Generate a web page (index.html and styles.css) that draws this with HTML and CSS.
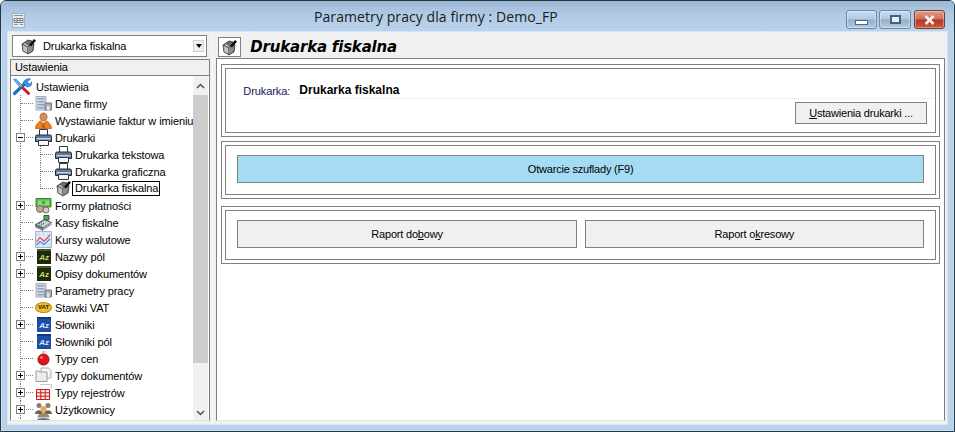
FILE: index.html
```html
<!DOCTYPE html>
<html lang="pl">
<head>
  <meta charset="UTF-8">
  <meta name="viewport" content="width=device-width, initial-scale=1.0">
  <title>Parametry pracy dla firmy : Demo_FP</title>
  <link rel="stylesheet" href="styles.css">
</head>
<body>
  <svg class="defs" width="0" height="0">
    <symbol id="i-fiscal" viewBox="0 0 17 17">
      <path d="M2 6l6-4 4 1 2 3-1 7-5 3-5-3z" fill="#6e6e6e" stroke="#333" stroke-width=".8"/>
      <path d="M2.500 6.500l5 2.500v6.500l-4.500-2.800z" fill="#c4c4c4" stroke="#4a4a4a" stroke-width=".5"/>
      <path d="M8 9l5-2.500-.7 6.200-4.300 2.600z" fill="#8c8c8c"/>
      <path d="M9 7l5-6 2 1.500-5 6z" fill="#0c0c0c"/>
      <path d="M4 5.500l3.500 2" stroke="#f2f2f2"/>
    </symbol>
    <symbol id="i-tools" viewBox="0 0 20 18">
      <path d="M2.500 15.500L14 4.500" stroke="#1f6fc9" stroke-width="3.200" stroke-linecap="round"/>
      <path d="M11.500 5c0-3 4-5 7-4l-3 2.500.5 2 2.500.5 1.500-2.500c.5 3-2 6.500-6 5z" fill="#3d97ea" stroke="#155a9f" stroke-width=".6"/>
      <path d="M1.500 1.500l2.500-.5 5.500 5.500 2 2-2 2-2-2z" fill="#67b2f0" stroke="#1e69b4" stroke-width=".6"/>
      <path d="M10.500 9.500l6 6" stroke="#c9202a" stroke-width="3" stroke-linecap="round"/>
    </symbol>
    <symbol id="i-building" viewBox="0 0 17 17">
      <path d="M1 1.500h10v13.500H1z" fill="#d3dae4" stroke="#a3aebc"/>
      <path d="M2.500 3h7v1.500h-7zM2.500 6h7v1.500h-7zM2.500 9h7v1.500h-7zM2.500 12h7v1.500h-7z" fill="#8ba2c2"/>
      <path d="M10 8h6.500v7H10z" fill="#a9adb3" stroke="#75797f"/>
      <path d="M12 11h2.500v4H12z" fill="#e4e6e9"/>
    </symbol>
    <symbol id="i-person" viewBox="0 0 17 17">
      <path d="M8.500 1c2.300 0 3.500 1.700 3.500 4s-1.500 4-3.500 4S5 7.300 5 5s1.200-4 3.500-4z" fill="#d9904f" stroke="#99521c" stroke-width=".7"/>
      <path d="M.5 16.500c.3-4.500 3-6.500 5-7.500l3 2.500 3-2.500c2 1 4.700 3 5 7.500z" fill="#ee7f1c" stroke="#a8530f" stroke-width=".7"/>
      <path d="M7 11l1.500 1.500L10 11v5.500H7z" fill="#c9600f"/>
    </symbol>
    <symbol id="i-printer" viewBox="0 0 17 17">
      <path d="M4.500 .5h8v6.500h-8z" fill="#fff" stroke="#30394a"/>
      <path d="M.5 7.500q0-1.500 1.500-1.500h13q1.500 0 1.500 1.500v5h-16z" fill="#5f7696" stroke="#232c3c"/>
      <path d="M1.500 9h14v1.500h-14z" fill="#c5d2e3"/>
      <path d="M3.500 11.500h10v5h-10z" fill="#f4f6fa" stroke="#30394a"/>
    </symbol>
    <symbol id="i-money" viewBox="0 0 17 17">
      <path d="M1 1.500h15v8.500H1z" fill="#5fbc50" stroke="#35852e"/>
      <path d="M3 3.500h11v4.500H3z" fill="#8fd67f"/>
      <circle cx="8.500" cy="5.500" r="1.800" fill="#4ba53f"/>
      <circle cx="5" cy="12" r="3.500" fill="#b9a795" stroke="#7a6c5f"/>
      <circle cx="11" cy="13" r="3" fill="#d5cdc3" stroke="#7a6c5f"/>
    </symbol>
    <symbol id="i-till" viewBox="0 0 17 17">
      <path d="M.5 10.500l9-5 7 3-8.500 5.500z" fill="#c7d0d8" stroke="#3f4b57"/>
      <path d="M.5 10.500l7.500 3.500v2.500L.5 13z" fill="#74808b" stroke="#3f4b57" stroke-width=".5"/>
      <path d="M8 16.500l8.500-5.500V8.500L8 14z" fill="#98a4ae"/>
      <path d="M9 1.500h5v4.500H9z" fill="#52a75b" stroke="#2a5f2e"/>
      <path d="M4 10l1-.5M6 9l1-.5M6 11l1-.5M8 10l1-.5" stroke="#333"/>
    </symbol>
    <symbol id="i-chart" viewBox="0 0 17 17">
      <path d="M.5.500h16v16H.5z" fill="#d5e2f5" stroke="#9fb6d6"/>
      <path d="M1 6h15M1 11h15M6 1v15M11 1v15" stroke="#eef4fc"/>
      <path d="M1.500 11L5 6.500l4 4 6-6.500" stroke="#e04f55" stroke-width="1.200" fill="none"/>
      <path d="M1.500 14L5 10.500l4 3 6-5.500" stroke="#4f88cf" stroke-width="1.200" fill="none"/>
    </symbol>
    <symbol id="i-ball" viewBox="0 0 17 17">
      <circle cx="8.500" cy="9.500" r="5.500" fill="#e4121b" stroke="#8c0c10"/>
      <circle cx="6.500" cy="7.500" r="1.500" fill="#f77"/>
      <path d="M7 1h3.500v2.500H7z" fill="#d9c7a8"/>
    </symbol>
    <symbol id="i-docs" viewBox="0 0 17 17">
      <path d="M6 1h7.500L16 3.500V11H6z" fill="#f5f5f5" stroke="#adadad"/>
      <path d="M1 4h3l1 1h7v9.500H1z" fill="#ececec" stroke="#9c9c9c"/>
    </symbol>
    <symbol id="i-grid" viewBox="0 0 17 17">
      <path d="M5 .5h11.500v4" fill="none" stroke="#c8c8c8"/>
      <path d="M1.500 5.500h13v10h-13zM1.500 8.800h13M1.500 12.200h13M5.800 5.500v10M10.200 5.500v10" fill="#fde8e8" stroke="#c41a1a"/>
    </symbol>
    <symbol id="i-users" viewBox="0 0 17 17">
      <circle cx="4" cy="4.500" r="2.500" fill="#8c7a70"/>
      <circle cx="13" cy="4.500" r="2.500" fill="#8c7a70"/>
      <path d="M0 13c0-5 8-5 8 0zM9 13c0-5 8-5 8 0z" fill="#6f6259"/>
      <circle cx="8.500" cy="8" r="3" fill="#e1ac62"/>
      <path d="M2.500 16.500c0-6 12-6 12 0z" fill="#a78a5c"/>
    </symbol>
    <symbol id="i-link" viewBox="0 0 17 17">
      <path d="M2.500 2.500c1.500-2 10-2 12 0" fill="none" stroke="#4a78b8" stroke-width="2"/>
    </symbol>
  </svg>

  <div class="window">
    <header class="titlebar">
      <svg class="app-icon" viewBox="0 0 13 15" width="13" height="15">
        <path d="M.5.500h12v14H.5z" fill="#e4e9ee" stroke="#a8b2bc"/>
        <path d="M2 2.500h9" stroke="#8a95a1"/>
        <path d="M2 5.500h9v4H2zM2 7.500h9M5 5.500v4M8 5.500v4" fill="#f5f7f9" stroke="#78838f"/>
        <path d="M2 11.500h4M8 11.500h3" stroke="#8a95a1"/>
      </svg>
      <span class="title">Parametry pracy dla firmy : Demo_FP</span>
      <div class="controls">
        <span class="ctl ctl-min"><i></i></span>
        <span class="ctl ctl-max"><i></i></span>
        <span class="ctl ctl-close">
          <svg viewBox="0 0 13 10" width="13" height="10"><path d="M2.500 1l8 8M10.500 1l-8 8" stroke="#f6efec" stroke-width="2.600"/></svg>
        </span>
      </div>
    </header>

    <div class="client">
      <aside class="side">
        <div class="combo">
          <svg class="icon"><use href="#i-fiscal"/></svg>
          <span class="combo-text">Drukarka fiskalna</span>
          <span class="combo-btn"></span>
        </div>
        <div class="side-head">Ustawienia</div>
        <div class="tree-box">
          <ul class="tree">
            <li class="row root"><svg class="icon-root"><use href="#i-tools"/></svg><span>Ustawienia</span></li>
            <li class="row"><b class="tee"></b><svg class="icon"><use href="#i-building"/></svg><span>Dane firmy</span></li>
            <li class="row"><b class="tee"></b><svg class="icon"><use href="#i-person"/></svg><span>Wystawianie faktur w imieniu</span></li>
            <li class="row"><b class="tee"><em class="toggle open"></em></b><svg class="icon"><use href="#i-printer"/></svg><span>Drukarki</span></li>
            <li class="row"><b class="pass"></b><b class="tee"></b><svg class="icon"><use href="#i-printer"/></svg><span>Drukarka tekstowa</span></li>
            <li class="row"><b class="pass"></b><b class="tee"></b><svg class="icon"><use href="#i-printer"/></svg><span>Drukarka graficzna</span></li>
            <li class="row"><b class="pass"></b><b class="tee elbow"></b><svg class="icon"><use href="#i-fiscal"/></svg><span class="selected">Drukarka fiskalna</span></li>
            <li class="row"><b class="tee"><em class="toggle"></em></b><svg class="icon"><use href="#i-money"/></svg><span>Formy płatności</span></li>
            <li class="row"><b class="tee"></b><svg class="icon"><use href="#i-till"/></svg><span>Kasy fiskalne</span></li>
            <li class="row"><b class="tee"></b><svg class="icon"><use href="#i-chart"/></svg><span>Kursy walutowe</span></li>
            <li class="row"><b class="tee"><em class="toggle"></em></b><i class="az az-dark">Az</i><span>Nazwy pól</span></li>
            <li class="row"><b class="tee"><em class="toggle"></em></b><i class="az az-dark">Az</i><span>Opisy dokumentów</span></li>
            <li class="row"><b class="tee"></b><svg class="icon"><use href="#i-building"/></svg><span>Parametry pracy</span></li>
            <li class="row"><b class="tee"></b><i class="vat">VAT</i><span>Stawki VAT</span></li>
            <li class="row"><b class="tee"><em class="toggle"></em></b><i class="az az-blue">Az</i><span>Słowniki</span></li>
            <li class="row"><b class="tee"></b><i class="az az-blue">Az</i><span>Słowniki pól</span></li>
            <li class="row"><b class="tee"></b><svg class="icon"><use href="#i-ball"/></svg><span>Typy cen</span></li>
            <li class="row"><b class="tee"><em class="toggle"></em></b><svg class="icon"><use href="#i-docs"/></svg><span>Typy dokumentów</span></li>
            <li class="row"><b class="tee"><em class="toggle"></em></b><svg class="icon"><use href="#i-grid"/></svg><span>Typy rejestrów</span></li>
            <li class="row"><b class="tee"><em class="toggle"></em></b><svg class="icon"><use href="#i-users"/></svg><span>Użytkownicy</span></li>
            <li class="row"><b class="tee"></b><svg class="icon"><use href="#i-link"/></svg></li>
          </ul>
          <div class="scrollbar">
            <svg class="arrow" viewBox="0 0 9 6" width="9" height="6"><path d="M1 5l3.500-3.500L8 5" fill="none" stroke="#505050" stroke-width="1.500"/></svg>
            <div class="thumb"></div>
            <svg class="arrow" viewBox="0 0 9 6" width="9" height="6"><path d="M1 1l3.500 3.500L8 1" fill="none" stroke="#505050" stroke-width="1.500"/></svg>
          </div>
        </div>
      </aside>

      <main class="main">
        <div class="main-head">
          <span class="head-icon"><svg class="icon"><use href="#i-fiscal"/></svg></span>
          <h1>Drukarka fiskalna</h1>
        </div>
        <div class="panel">
          <section class="group">
            <div class="group-inner printer">
              <div class="field">
                <span class="field-label">Drukarka:</span>
                <span class="field-value">Drukarka fiskalna</span>
              </div>
              <div class="btn-right">
                <button class="btn btn-settings"><u>U</u>stawienia drukarki ...</button>
              </div>
            </div>
          </section>
          <section class="group">
            <div class="group-inner actions">
              <button class="btn btn-blue">Otwarcie szuflady (F9)</button>
            </div>
          </section>
          <section class="group group-last">
            <div class="group-inner actions">
              <button class="btn">Raport do<u>b</u>owy</button>
              <button class="btn">Raport o<u>k</u>resowy</button>
            </div>
          </section>
        </div>
      </main>
    </div>
  </div>
</body>
</html>
```

FILE: styles.css
```css
* {
  box-sizing: border-box;
  margin: 0;
  padding: 0;
}
body {
  width: 955px;
  height: 432px;
  overflow: hidden;
  background: #fff;
  font-family: 'Liberation Sans', Arial, sans-serif;
  font-size: 11px;
  letter-spacing: -0.1px;
  color: #000;
}
.defs {
  position: absolute;
}

/* okno */
.window {
  display: flex;
  flex-direction: column;
  width: 955px;
  height: 432px;
  border: 1px solid #24363f;
  border-radius: 6px 6px 0 0;
  background: #b9d1ea;
  box-shadow: inset 0 0 0 1px #c4e2ef;
  overflow: hidden;
}
.titlebar {
  display: flex;
  align-items: center;
  flex: 0 0 31px;
  padding: 0 9px 0 11px;
  background: linear-gradient(180deg, #9db8d4 0, #b2cbe5 45%, #bad3ee 100%);
}
.app-icon {
  margin-top: 8px;
}
.title {
  flex: 1;
  padding: 0 0 0 289px;
  font-family: 'Open Sans', sans-serif;
  font-size: 14px;
  letter-spacing: 0.08px;
  color: #1a1a1a;
}
.controls {
  display: flex;
  align-self: flex-start;
  margin-top: 9px;
}
.ctl {
  display: flex;
  align-items: center;
  justify-content: center;
  width: 31px;
  height: 19px;
  border: 1px solid #6d87a1;
  border-radius: 3px;
  background: linear-gradient(180deg, #c9dbee 0, #b0c8e1 48%, #92aecb 52%, #b4cce5 100%);
  box-shadow: inset 0 0 0 1px rgba(255, 255, 255, 0.35);
}
.ctl-min i {
  display: block;
  width: 13px;
  height: 5px;
  margin-top: 6px;
  border: 1px solid #51667c;
  background: #fff;
}
.ctl-max {
  width: 32px;
  margin: 0 3px 0 2px;
}
.ctl-max i {
  display: block;
  width: 11px;
  height: 9px;
  border: 2px solid #4c6177;
  background: #e6eef6;
}
.ctl-close {
  border-color: #7c3a2f;
  background: linear-gradient(180deg, #dd9c8b 0, #cc7058 48%, #b5341f 52%, #cb5a42 100%);
}

.client {
  display: flex;
  flex: 1;
  min-height: 0;
  margin: 0 7px 7px;
  background: #f0f0f0;
  box-shadow: 0 0 0 1px #d6e5f4;
}

/* lewa strona */
.side {
  display: flex;
  flex-direction: column;
  flex: 0 0 202px;
  min-height: 0;
  padding: 3px 0 3px 2px;
}
.combo {
  display: flex;
  align-items: center;
  flex: 0 0 22px;
  margin: 0 3px 2px 2px;
  padding: 0 2px 0 7px;
  border: 1px solid #808080;
  background: #fff;
}
.combo-text {
  flex: 1;
  padding-left: 3px;
}
.combo-btn {
  position: relative;
  width: 11px;
  height: 12px;
  border: 1px solid #d0d0d0;
  background: #f0f0f0;
}
.combo-btn::after {
  content: "";
  position: absolute;
  left: 2px;
  top: 3px;
  border: 3px solid transparent;
  border-top: 4px solid #000;
  border-bottom: 0;
}
.side-head {
  flex: 0 0 17px;
  padding-left: 4px;
  border: 1px solid #808080;
  line-height: 15px;
}
.tree-box {
  display: flex;
  flex: 1;
  min-height: 0;
  border: 1px solid #808080;
  border-top-width: 0;
  border-bottom-color: #e4e4e4;
  background: #fff;
}
.tree {
  flex: 1;
  padding-top: 2px;
  list-style: none;
  overflow: hidden;
}
.row {
  display: flex;
  align-items: center;
  height: 17px;
  padding-left: 9px;
  white-space: nowrap;
}
.row.root {
  padding-left: 1px;
}
.icon {
  flex: none;
  width: 17px;
  height: 17px;
  margin-right: 3px;
}
.icon-root {
  flex: none;
  width: 20px;
  height: 18px;
  margin-right: 4px;
}
.az {
  flex: none;
  width: 14px;
  height: 15px;
  margin: 0 4px 0 2px;
  border-top: 2px solid #46562a;
  background: #1d2a0c;
  color: #cfd86a;
  font-size: 8px;
  font-weight: bold;
  line-height: 13px;
  text-align: center;
}
.az-blue {
  border-top-color: #143777;
  background: #1c4fa8;
  color: #dfe9ff;
}
.vat {
  flex: none;
  width: 17px;
  height: 11px;
  margin-right: 3px;
  border: 1px solid #b88a10;
  border-radius: 50%;
  background: #f1bf28;
  color: #222;
  font-size: 6px;
  font-style: normal;
  font-weight: bold;
  line-height: 9px;
  letter-spacing: 0;
  text-align: center;
}
.pass {
  flex: none;
  width: 20px;
  height: 17px;
  border-left: 1px dotted #808080;
}
.tee {
  position: relative;
  flex: none;
  width: 13px;
  height: 17px;
  margin-right: 2px;
  border-left: 1px dotted #808080;
}
.tee::before {
  content: "";
  position: absolute;
  left: 0;
  top: 8px;
  width: 12px;
  border-top: 1px dotted #808080;
}
.tee.elbow {
  height: 9px;
  align-self: flex-start;
}
.toggle {
  position: absolute;
  left: -5px;
  top: 4px;
  width: 9px;
  height: 9px;
  border: 1px solid #808080;
  background: linear-gradient(#000, #000) center / 5px 1px no-repeat,
    linear-gradient(#000, #000) center / 1px 5px no-repeat,
    #fff;
}
.toggle.open {
  background: linear-gradient(#000, #000) center / 5px 1px no-repeat, #fff;
}
.selected {
  margin-left: -3px;
  padding: 0 1px 0 2px;
  border: 1px solid #000;
  line-height: 13px;
}
.scrollbar {
  display: flex;
  flex-direction: column;
  align-items: center;
  flex: 0 0 15px;
  margin-right: 1px;
  padding: 7px 0 4px;
  background: #f0f0f0;
}
.thumb {
  flex: 0 0 268px;
  align-self: stretch;
  margin: 6px 0 auto;
  background: #cdcdcd;
}

/* prawa strona */
.main {
  display: flex;
  flex-direction: column;
  flex: 1;
  min-height: 0;
  margin-left: 2px;
  padding: 4px 2px 3px 3px;
  border-left: 1px solid #fbfbfb;
}
.main-head {
  display: flex;
  align-items: center;
  flex: 0 0 22px;
  padding-left: 2px;
}
.head-icon {
  display: flex;
  align-items: center;
  justify-content: center;
  width: 23px;
  height: 20px;
  border: 1px solid #808080;
  background: #fff;
}
.head-icon .icon {
  margin: 0;
}
.main-head h1 {
  padding-left: 9px;
  font-family: 'DejaVu Sans', sans-serif;
  font-size: 15px;
  font-style: italic;
  font-weight: bold;
  letter-spacing: -0.2px;
  white-space: nowrap;
}
.panel {
  display: flex;
  flex-direction: column;
  flex: 1;
  gap: 4px;
  padding: 5px 4px 0 4px;
  border: 1px solid #808080;
  border-bottom-color: #e4e4e4;
  background: #fff;
}
.group {
  padding: 3px;
  border: 1px solid #808080;
  background: #fff;
}
.group-last {
  margin-top: 3px;
}
.group-inner {
  border: 1px solid #808080;
  background: #fff;
}
.printer {
  height: 65px;
  padding: 13px 8px 0 17px;
}
.field {
  display: flex;
  align-items: center;
  height: 17px;
}
.field-label {
  width: 53px;
  color: #14145a;
}
.field-value {
  flex: 1;
  margin-right: -8px;
  padding: 0 0 1px 3px;
  border-bottom: 1px solid #f0f0f0;
  font-size: 12px;
  font-weight: bold;
  letter-spacing: 0;
}
.btn-right {
  display: flex;
  justify-content: flex-end;
  margin-top: 3px;
}
.btn {
  height: 28px;
  border: 1px solid #808080;
  background: #f0f0f0;
  font: 11px 'Liberation Sans', sans-serif;
  letter-spacing: -0.2px;
  color: #000;
}
.btn-settings {
  width: 132px;
  height: 22px;
}
.actions {
  display: flex;
  gap: 8px;
  height: 50px;
  padding: 9px 11px 0;
}
.actions .btn {
  flex: 1;
}
.btn-blue {
  background: #a5dcf3;
}
```
